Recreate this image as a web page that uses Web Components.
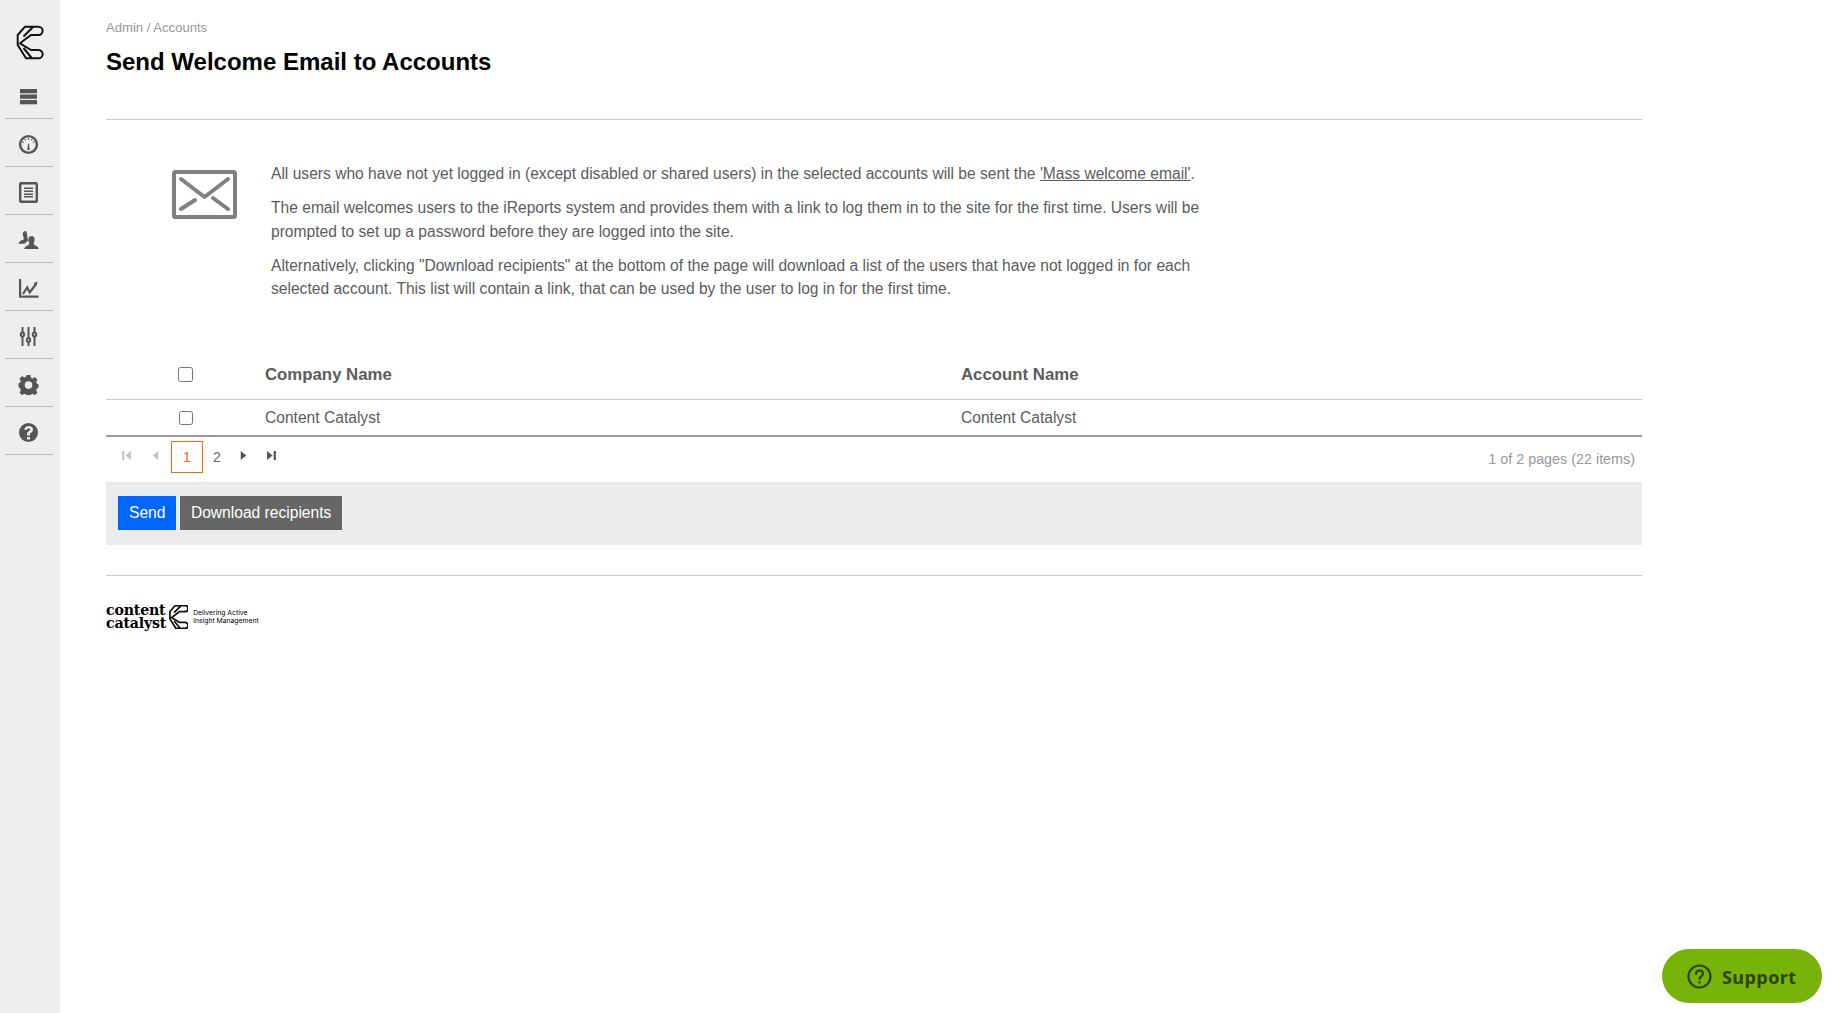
<!DOCTYPE html>
<html lang="en">
<head>
<meta charset="utf-8">
<title>Send Welcome Email to Accounts</title>
<style>
  html, body { margin: 0; height: 100%; background: #fff; }
  body { font-family: "Liberation Sans", Arial, sans-serif; }
  info-panel a { color: inherit; }
</style>
</head>
<body>
<app-shell>
  <side-nav slot="nav">
    <nav-item icon="menu"></nav-item>
    <nav-item icon="gauge"></nav-item>
    <nav-item icon="doc"></nav-item>
    <nav-item icon="users"></nav-item>
    <nav-item icon="chart"></nav-item>
    <nav-item icon="sliders"></nav-item>
    <nav-item icon="cog"></nav-item>
    <nav-item icon="help"></nav-item>
  </side-nav>
  <page-header crumb="Admin / Accounts" heading="Send Welcome Email to Accounts"></page-header>
  <info-panel>
    <p>All users who have not yet logged in (except disabled or shared users) in the selected accounts will be sent the <a href="#">'Mass welcome email'</a>.</p>
    <p>The email welcomes users to the iReports system and provides them with a link to log them in to the site for the first time. Users will be prompted to set up a password before they are logged into the site.</p>
    <p>Alternatively, clicking "Download recipients" at the bottom of the page will download a list of the users that have not logged in for each selected account. This list will contain a link, that can be used by the user to log in for the first time.</p>
  </info-panel>
  <account-table></account-table>
  <table-pager></table-pager>
  <action-bar></action-bar>
  <page-footer></page-footer>
</app-shell>
<support-button></support-button>

<script>
// Brand mark, shared by the side bar and the footer
const LOGO_PATH = 'M15 6.7H28.5A4.150 4.150 0 0 1 28.5 15H21L10 23.300 21 30H28.5A4.150 4.150 0 0 1 28.5 38.300H16L7.700 25V15ZM23 7 13.500 16.500M13.500 28 21.700 38';

const ICONS = {
  menu: '<rect x="2" y="3" width="17" height="4.300" /><rect x="2" y="8.500" width="17" height="4.300" /><rect x="2" y="14" width="17" height="4.300" />',
  gauge: '<circle cx="10.500" cy="10.500" r="8.400" fill="none" stroke="currentColor" stroke-width="2.400"/><path d="M10.100 9.500h.8l.9 6.500H9.200z"/><circle cx="10.500" cy="4.900" r=".8"/><circle cx="7.300" cy="5.800" r=".8"/><circle cx="13.700" cy="5.800" r=".8"/><circle cx="5.200" cy="8.200" r=".8"/><circle cx="15.800" cy="8.200" r=".8"/>',
  doc: '<rect x="2.200" y="1.200" width="16.600" height="18.600" rx="1" fill="none" stroke="currentColor" stroke-width="2.400"/><rect x="6" y="5.500" width="9" height="1.500"/><rect x="6" y="8.500" width="9" height="1.500"/><rect x="6" y="11.500" width="9" height="1.500"/><rect x="6" y="14" width="9" height="1.500"/>',
  users: '<path d="M7.500 1C5.600 1 4.600 2.600 4.800 4.600 5 6.600 5.800 8 5.900 9 4.600 10.300.8 11 .5 13.800h6.200c.9-1.600 2.400-2.400 3.600-3-.2-1-.9-2-1-3.200.1-2-.1-3-.4-4.400C8.600 2 8.300 1 7.500 1z"/><path d="M13.500 6c-2.300 0-3.300 1.800-3.100 3.900.2 1.900 1 3.200 1.100 4.200-.1 1-4.700 1.800-5.300 4.900h14.600c-.6-3.100-5.200-3.900-5.300-4.900.1-1 .9-2.300 1.100-4.200.2-2.100-.8-3.900-3.100-3.900z"/>',
  chart: '<path d="M1 1h2.200v16.500H20.500v2.300H1z"/><path d="M5 16l4.300-6.500 2.500 5L18 6" fill="none" stroke="currentColor" stroke-width="2.200"/><path d="M15.500 5l4-1.500-.8 4.200z"/>',
  sliders: '<g fill="none" stroke="currentColor" stroke-width="2"><path d="M4.500 1v5.500M4.500 10.500V20M10.500 1v11M10.500 16v4M16.500 1v5.500M16.500 10.500V20"/><ellipse cx="4.500" cy="8.500" rx="1.700" ry="2"/><ellipse cx="10.500" cy="14" rx="1.700" ry="2"/><ellipse cx="16.500" cy="8.500" rx="1.700" ry="2"/></g>',
  cog: '<path fill-rule="evenodd" d="M8.600 1h3.800l.5 2.600 1.700.8 2.300-1.400 2.600 2.700-1.400 2.200.7 1.700 1.700.6v3.800l-1.700.6-.7 1.700 1.400 2.200-2.600 2.700-2.300-1.400-1.700.8-.5 1.400H8.600l-.5-1.400-1.700-.8-2.300 1.400-2.600-2.700 1.400-2.200-.7-1.700L.5 13V9.200l1.700-.6.7-1.700-1.400-2.200 2.600-2.700 2.300 1.400 1.700-.8zM10.500 7.300a3.800 3.800 0 1 0 0 7.600 3.800 3.800 0 0 0 0-7.600z"/>',
  help: '<path fill-rule="evenodd" d="M10.500 1a9.500 9.500 0 1 0 0 19 9.500 9.500 0 0 0 0-19zM9 15h3v2.500H9zM6.300 7.800C6.500 5.300 8.300 4 10.700 4c2.500 0 4.300 1.400 4.300 3.500 0 1.700-1 2.500-2 3.200-.8.500-1.100.9-1.100 1.900V13.500H9v-1.100c0-1.700.7-2.500 1.700-3.200.8-.5 1.300-.9 1.300-1.600 0-.8-.6-1.300-1.400-1.300-.9 0-1.400.6-1.500 1.500z"/>'
};

class AppShell extends HTMLElement {
  constructor() {
    super();
    this.attachShadow({ mode: 'open' });
    this.shadowRoot.innerHTML = `
      <style>
        :host { display: flex; min-height: 1013px; color: #5c5c5c; font-family: "Liberation Sans", Arial, sans-serif; }
        main { width: 1536px; margin-left: 46px; display: flex; flex-direction: column; }
      </style>
      <slot name="nav"></slot>
      <main><slot></slot></main>
    `;
  }
}

class SideNav extends HTMLElement {
  constructor() {
    super();
    this.attachShadow({ mode: 'open' });
    this.shadowRoot.innerHTML = `
      <style>
        :host { display: block; width: 60px; flex: none; background: #eee; }
        .logo { height: 71px; box-sizing: border-box; padding: 26px 0 0 17px; }
        svg { display: block; overflow: visible; fill: none; stroke: #111; stroke-width: 2; stroke-linejoin: round; }
      </style>
      <div class="logo"><svg width="25" height="33" viewBox="7 6 25 33"><path d="${LOGO_PATH}"/></svg></div>
      <slot></slot>
    `;
  }
}

class NavItem extends HTMLElement {
  constructor() {
    super();
    this.attachShadow({ mode: 'open' });
  }

  connectedCallback() {
    const icon = ICONS[this.getAttribute('icon')] || '';
    this.shadowRoot.innerHTML = `
      <style>
        :host { display: flex; align-items: center; justify-content: center; height: 48px; width: 48px; margin-left: 5px; box-sizing: border-box; padding: 3px 1px 0 0; border-bottom: 1px solid #bbb; color: #555; }
        svg { display: block; fill: currentColor; }
      </style>
      <svg width="21" height="21" viewBox="0 0 21 21">${icon}</svg>
    `;
  }
}

class PageHeader extends HTMLElement {
  constructor() {
    super();
    this.attachShadow({ mode: 'open' });
  }

  connectedCallback() {
    this.shadowRoot.innerHTML = `
      <style>
        :host { display: block; height: 120px; box-sizing: border-box; border-bottom: 1px solid #ccc; padding-top: 20px; }
        .crumb { font-size: 13.100px; line-height: 15px; color: #999; }
        h1 { margin: 12px 0 0; font-size: 24px; line-height: 30px; font-weight: 700; color: #000; }
      </style>
      <div class="crumb">${this.getAttribute('crumb')}</div>
      <h1>${this.getAttribute('heading')}</h1>
    `;
  }
}

class InfoPanel extends HTMLElement {
  constructor() {
    super();
    this.attachShadow({ mode: 'open' });
    this.shadowRoot.innerHTML = `
      <style>
        :host { display: flex; height: 233px; box-sizing: border-box; padding: 42px 0 0 66px; font-size: 15.600px; line-height: 23.500px; color: #5c5c5c; }
        svg { display: block; flex: none; margin-top: 8px; }
        .copy { width: 935px; margin-left: 34px; }
        ::slotted(p) { margin: 0 0 10.500px; }
      </style>
      <svg width="65" height="49" viewBox="0 0 65 49" fill="none" stroke="#808080" stroke-width="4" stroke-linecap="round" stroke-linejoin="round">
        <rect x="2" y="2" width="61" height="45" rx="1.500"/>
        <path d="M9 9 32.500 27 56 9M9 39l14-9M56 39l-15-11"/>
      </svg>
      <div class="copy"><slot></slot></div>
    `;
  }
}

class AccountTable extends HTMLElement {
  constructor() {
    super();
    this.attachShadow({ mode: 'open' });
    this.shadowRoot.innerHTML = `
      <style>
        :host { display: block; font-size: 15.600px; color: #5c5c5c; }
        .row { display: grid; grid-template-columns: 159px 696px 1fr; align-items: center; box-sizing: border-box; }
        .head { height: 47px; padding-bottom: 2px; font-weight: 700; font-size: 16.800px; border-bottom: 1px solid #ccc; }
        .body { height: 37px; border-bottom: 2px solid #999; }
        .body .cell { padding-top: 1px; }
        .check { display: flex; justify-content: center; }
        input { margin: 0 0 2px; width: 15px; height: 15px; }
        .body input { margin: 0; width: 14px; height: 14px; }
      </style>
      <div class="row head">
        <span class="check"><input type="checkbox" aria-label="Select all"></span>
        <span>Company Name</span>
        <span>Account Name</span>
      </div>
      <div class="row body">
        <span class="check"><input type="checkbox" aria-label="Select row"></span>
        <span class="cell">Content Catalyst</span>
        <span class="cell">Content Catalyst</span>
      </div>
    `;
  }
}

class TablePager extends HTMLElement {
  constructor() {
    super();
    this.attachShadow({ mode: 'open' });
    this.shadowRoot.innerHTML = `
      <style>
        :host { display: flex; align-items: center; height: 45px; box-sizing: border-box; font-size: 14px; color: #666; }
        .links { display: flex; align-items: center; margin-left: 14px; height: 32px; position: relative; top: -3px; }
        .btn { display: flex; align-items: center; justify-content: center; width: 12px; height: 32px; padding-bottom: 2px; box-sizing: border-box; }
        .num { width: 32px; height: 32px; display: flex; align-items: center; justify-content: center; box-sizing: border-box; }
        .num + .num { margin-left: -2px; }
        .cur { border: 1px solid #f26a13; color: #f26a13; }
        .off { color: #c4c4c4; }
        .on { color: #555; }
        svg { display: block; fill: currentColor; }
        .info { margin-left: auto; margin-right: 7px; color: #999; font-size: 14.350px; position: relative; top: -1px; }
      </style>
      <div class="links">
        <span class="btn off" style="margin-right:17px"><svg width="11" height="11" viewBox="0 0 10 10"><path d="M1 1h2v8H1zM9 1v8L4 5z"/></svg></span>
        <span class="btn off" style="margin-right:10px"><svg width="11" height="11" viewBox="0 0 10 10"><path d="M7.500 1v8L2.500 5z"/></svg></span>
        <span class="num cur">1</span>
        <span class="num">2</span>
        <span class="btn on" style="margin-left:4px"><svg width="11" height="11" viewBox="0 0 10 10"><path d="M2.500 1v8L7.500 5z"/></svg></span>
        <span class="btn on" style="margin-left:16px"><svg width="11" height="11" viewBox="0 0 10 10"><path d="M1 1v8l5-4zM7 1h2v8H7z"/></svg></span>
      </div>
      <div class="info">1 of 2 pages (22 items)</div>
    `;
  }
}

class ActionBar extends HTMLElement {
  constructor() {
    super();
    this.attachShadow({ mode: 'open' });
    this.shadowRoot.innerHTML = `
      <style>
        :host { display: flex; gap: 4px; height: 63px; box-sizing: border-box; padding: 13px 12px 0; background: #ececec; border-top: 1px solid #e4e4e4; }
        button { height: 34px; padding: 0 11px; border: 0; border-radius: 0; font: 15.600px "Liberation Sans", Arial, sans-serif; color: #fff; background: #666; }
        button:last-child { padding: 0 10.500px; }
        .send { background: #0066ff; }
      </style>
      <button class="send">Send</button>
      <button>Download recipients</button>
    `;
  }
}

class PageFooter extends HTMLElement {
  constructor() {
    super();
    this.attachShadow({ mode: 'open' });
    this.shadowRoot.innerHTML = `
      <style>
        :host { display: flex; align-items: center; margin-top: 30px; padding-top: 28px; border-top: 1px solid #ccc; color: #000; }
        .name { font: 700 14.200px/12.500px "DejaVu Serif", "Liberation Serif", serif; letter-spacing: -.2px; }
        svg { display: block; margin: 0 5px 0 3px; fill: none; stroke: #111; stroke-width: 2.400; stroke-linejoin: round; }
        .tag { font: 6.800px/8px "Inter", "Liberation Sans", sans-serif; }
      </style>
      <div class="name">content<br>catalyst</div>
      <svg width="19" height="24" viewBox="7 6 25 33"><path d="${LOGO_PATH}"/></svg>
      <div class="tag">Delivering Active<br>Insight Management</div>
    `;
  }
}

class SupportButton extends HTMLElement {
  constructor() {
    super();
    this.attachShadow({ mode: 'open' });
    this.shadowRoot.innerHTML = `
      <style>
        :host { position: fixed; left: 1662px; top: 949px; width: 160px; height: 54px; display: flex; align-items: center; box-sizing: border-box; padding-left: 25px; border-radius: 27px; background: #78b309; color: #2d4400; font: 700 18px "Open Sans", "Noto Sans", sans-serif; letter-spacing: .4px; }
        svg { display: block; margin-right: 10px; flex: none; }
        span { position: relative; top: 1px; }
      </style>
      <svg width="25" height="25" viewBox="0 0 25 25" fill="none" stroke="currentColor" stroke-width="2.200">
        <circle cx="12.500" cy="12.500" r="11"/>
        <path d="M9 10c0-2.200 1.500-3.500 3.500-3.500S16 7.800 16 9.700c0 2.500-3.500 2.800-3.500 5.300" stroke-linecap="round"/>
        <path d="M12.500 17.300v2.200"/>
      </svg>
      <span>Support</span>
    `;
  }
}

customElements.define('app-shell', AppShell);
customElements.define('side-nav', SideNav);
customElements.define('nav-item', NavItem);
customElements.define('page-header', PageHeader);
customElements.define('info-panel', InfoPanel);
customElements.define('account-table', AccountTable);
customElements.define('table-pager', TablePager);
customElements.define('action-bar', ActionBar);
customElements.define('page-footer', PageFooter);
customElements.define('support-button', SupportButton);
</script>
</body>
</html>
